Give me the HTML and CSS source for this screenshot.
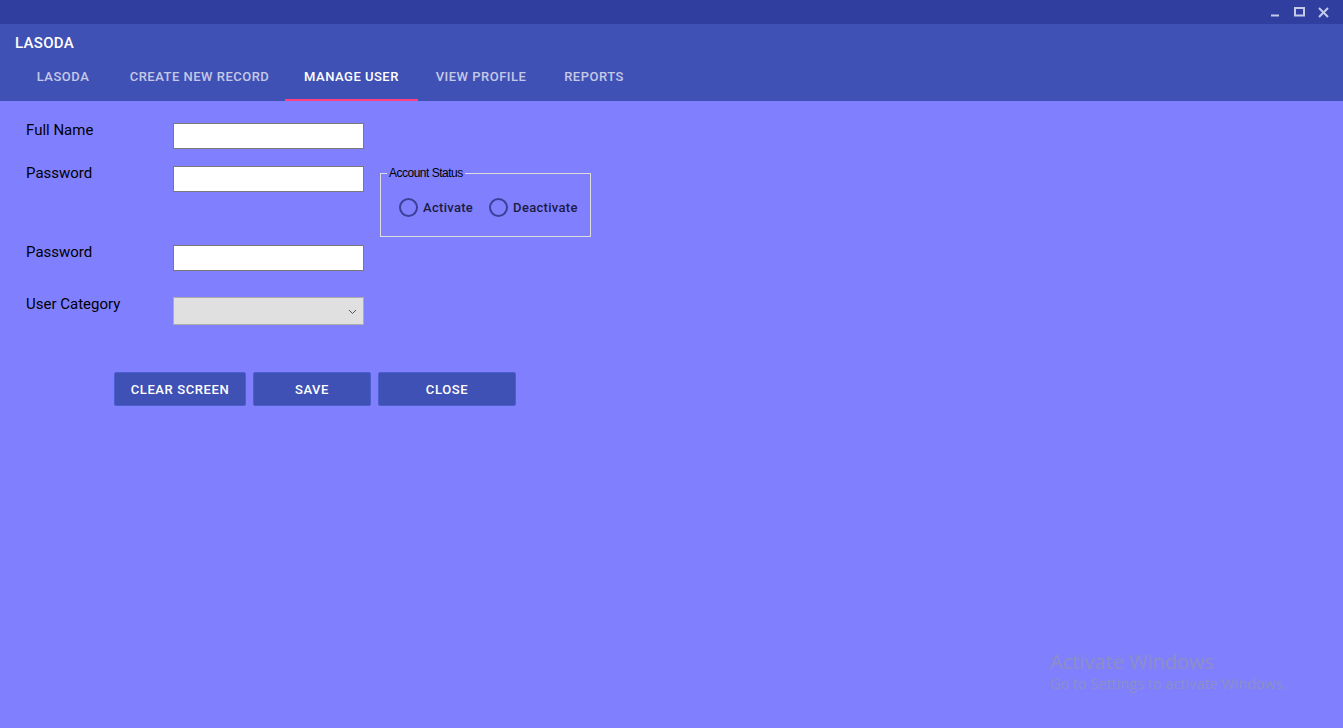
FILE: index.html
```html
<!DOCTYPE html>
<html lang="en">
<head>
    <meta charset="UTF-8">
    <meta name="viewport" content="width=device-width, initial-scale=1.0">
    <title>LASODA - Manage User</title>
    <link rel="stylesheet" href="styles.css">
</head>
<body>
    <div class="titlebar">
        <div class="winbtn">
            <svg width="10" height="10" viewBox="0 0 10 10"><path d="M1 8.5h8" stroke="#c5cae9" stroke-width="2"/></svg>
        </div>
        <div class="winbtn">
            <svg width="11" height="10" viewBox="0 0 11 10"><rect x="1" y="1" width="9" height="7.5" fill="none" stroke="#c5cae9" stroke-width="2"/></svg>
        </div>
        <div class="winbtn">
            <svg width="11" height="11" viewBox="0 0 11 11"><path d="M1 1l9 9M10 1l-9 9" stroke="#c5cae9" stroke-width="2"/></svg>
        </div>
    </div>

    <div class="appbar">
        <div class="app-title">LASODA</div>
        <div class="tabs">
            <div class="tab t1">LASODA</div>
            <div class="tab t2">CREATE NEW RECORD</div>
            <div class="tab t3 active">MANAGE USER</div>
            <div class="tab t4">VIEW PROFILE</div>
            <div class="tab t5">REPORTS</div>
        </div>
    </div>

    <div class="content">
        <div class="form-area">
            <div class="fields">
                <div class="row">
                    <label class="lbl">Full Name</label>
                    <input class="txt" type="text">
                </div>
                <div class="row gap-sm">
                    <label class="lbl">Password</label>
                    <input class="txt" type="password">
                </div>
                <div class="row gap-lg">
                    <label class="lbl">Password</label>
                    <input class="txt" type="password">
                </div>
                <div class="row gap-md">
                    <label class="lbl">User Category</label>
                    <div class="combo">
                        <svg width="9" height="6" viewBox="0 0 9 6"><path d="M1 1l3.5 3.5L8 1" fill="none" stroke="#555" stroke-width="1"/></svg>
                    </div>
                </div>
            </div>

            <fieldset class="status">
                <legend>Account Status</legend>
                <div class="radios">
                    <label class="radio"><span class="dot"></span>Activate</label>
                    <label class="radio"><span class="dot"></span>Deactivate</label>
                </div>
            </fieldset>
        </div>

        <div class="actions">
            <button class="btn b-clear">CLEAR SCREEN</button>
            <button class="btn b-save">SAVE</button>
            <button class="btn b-close">CLOSE</button>
        </div>
    </div>

    <div class="watermark">
        <div class="wm-title">Activate Windows</div>
        <div class="wm-sub">Go to Settings to activate Windows.</div>
    </div>
</body>
</html>
```

FILE: styles.css
```css
body {
    margin: 0;
    background-color: #8080ff;
    font-family: Roboto, 'Liberation Sans', sans-serif;
    height: 728px;
    overflow: hidden;
    position: relative;
}
.titlebar {
    height: 24px;
    background-color: #303f9f;
    display: flex;
    justify-content: flex-end;
    align-items: center;
    padding-right: 8px;
}
.winbtn {
    width: 24px;
    height: 24px;
    display: flex;
    justify-content: center;
    align-items: center;
}
.appbar {
    background-color: #3f51b5;
    height: 77px;
}
.app-title {
    height: 38px;
    line-height: 38px;
    padding-left: 15px;
    color: #fff;
    font-size: 15px;
    font-weight: 500;
    letter-spacing: 0.3px;
}
.tabs {
    display: flex;
    padding-left: 12px;
    height: 39px;
}
.tab {
    height: 30px;
    line-height: 30px;
    padding-bottom: 7px;
    border-bottom: 2px solid transparent;
    text-align: center;
    color: rgba(255, 255, 255, 0.7);
    font-size: 13px;
    font-weight: 500;
    letter-spacing: 0.5px;
}
.tab.active {
    color: #fff;
    border-bottom-color: #ff4081;
}
.t1 { width: 102px; }
.t2 { width: 171px; }
.t3 { width: 133px; }
.t4 { width: 126px; }
.t5 { width: 100px; }

.content {
    padding-top: 22px;
}
.form-area {
    display: flex;
    align-items: flex-start;
}
.fields {
    padding-left: 26px;
}
.row {
    display: flex;
    align-items: flex-start;
}
.gap-sm { margin-top: 17px; }
.gap-lg { margin-top: 53px; }
.gap-md { margin-top: 26px; }
.lbl {
    width: 147px;
    font-size: 15px;
    line-height: 18px;
    margin-top: -2px;
    color: #000;
}
.txt {
    width: 191px;
    height: 26px;
    box-sizing: border-box;
    border: 1px solid #7a7a7a;
    background: #fff;
    margin: 0;
    padding: 0 4px;
    outline: none;
}
.combo {
    width: 191px;
    height: 28px;
    box-sizing: border-box;
    border: 1px solid #acacac;
    background: #e0e0e0;
    display: flex;
    justify-content: flex-end;
    align-items: center;
    padding-right: 6px;
    padding-top: 2px;
}

.status {
    width: 211px;
    min-width: 0;
    box-sizing: border-box;
    margin: 43px 0 0 16px;
    border: 1px solid #dcdcdc;
    padding: 17px 4px 19px 6px;
}
.status legend {
    font-size: 12px;
    line-height: 14px;
    padding: 0 2px;
    color: #000;
    font-family: 'Liberation Sans', sans-serif;
    letter-spacing: -0.5px;
}
.radios {
    display: flex;
    padding-left: 12px;
    height: 20px;
    align-items: center;
}
.radio {
    display: flex;
    align-items: center;
    font-size: 13px;
    font-weight: 500;
    color: #1b1b45;
    letter-spacing: 0.3px;
    margin-right: 16px;
}
.radio:last-child {
    margin-right: 0;
}
.dot {
    width: 19px;
    height: 19px;
    box-sizing: border-box;
    border: 2px solid #3d3f99;
    border-radius: 50%;
    margin-right: 5px;
}

.actions {
    display: flex;
    gap: 7px;
    padding-left: 114px;
    margin-top: 47px;
}
.btn {
    height: 34px;
    background-color: #3f51b5;
    border: 1px solid #4d5fcc;
    border-radius: 2px;
    color: #fff;
    font-family: Roboto, 'Liberation Sans', sans-serif;
    font-size: 13px;
    font-weight: 500;
    letter-spacing: 0.6px;
    padding: 0;
    cursor: pointer;
}
.b-clear { width: 132px; }
.b-save { width: 118px; }
.b-close { width: 138px; }

.watermark {
    position: absolute;
    left: 1050px;
    top: 650px;
    color: #8e8ec4;
    font-family: 'Open Sans', 'Liberation Sans', sans-serif;
}
.wm-title {
    font-size: 20px;
    line-height: 24px;
}
.wm-sub {
    font-size: 14px;
    line-height: 20px;
    letter-spacing: 0.2px;
}
```
